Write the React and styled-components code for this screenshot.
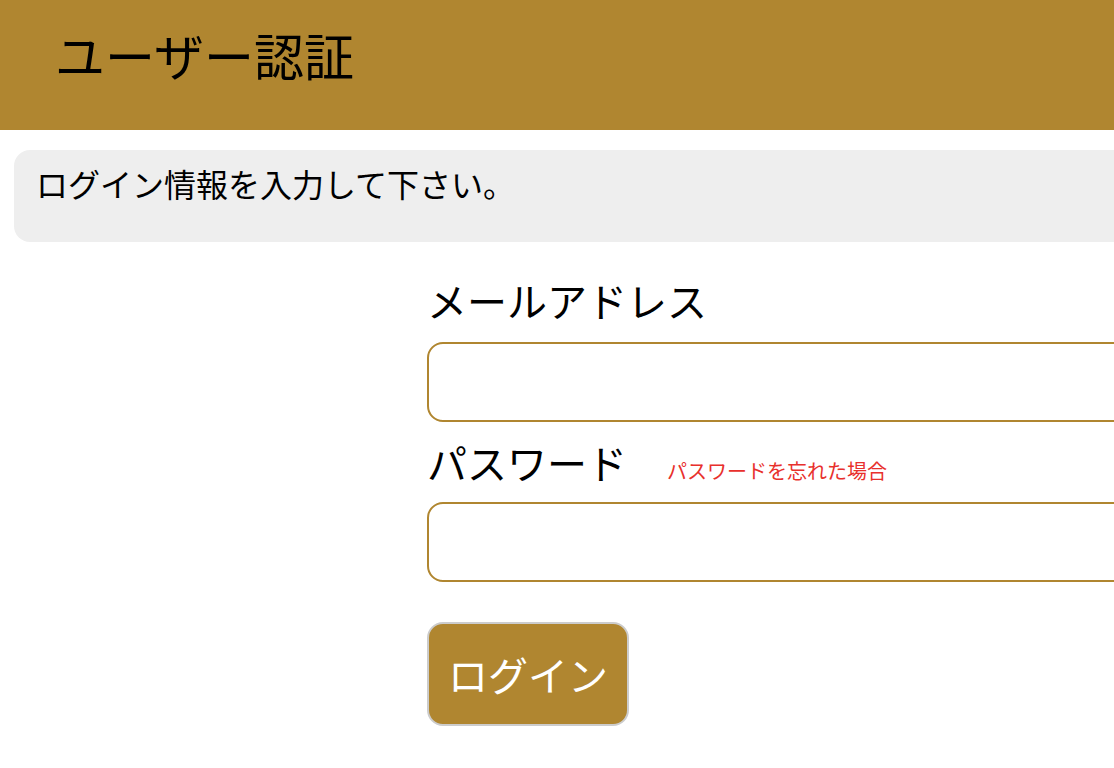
import React from "react";
import styled, { createGlobalStyle } from "styled-components";

const GOLD = "#b08630";

const GlobalStyle = createGlobalStyle`
  html, body {
    margin: 0;
    padding: 0;
    background: #fff;
    overflow: hidden;
  }
  body {
    font-family: "Noto Sans CJK JP", "Noto Sans", sans-serif;
    color: #000;
  }
`;

const Page = styled.div`
  width: 1114px;
  height: 768px;
  overflow: hidden;
`;

const Header = styled.header`
  height: 130px;
  background: ${GOLD};
  padding: 30px 0 0 55px;
  box-sizing: border-box;
`;

const Title = styled.h1`
  margin: 0;
  font-size: 50px;
  line-height: 48px;
  font-weight: 400;
  white-space: nowrap;
`;

const Notice = styled.div`
  margin: 20px 0 0 14px;
  width: 1200px;
  height: 92px;
  box-sizing: border-box;
  padding: 17px 22px;
  background: #eeeeee;
  border-radius: 16px;
  font-size: 32px;
  line-height: 32px;
  white-space: nowrap;
`;

const Form = styled.form`
  margin: 0 0 0 427px;
  padding-top: 38px;
  width: 800px;
  display: flex;
  flex-direction: column;
`;

const LabelRow = styled.div`
  display: flex;
  align-items: baseline;
  margin-top: ${(p) => (p.$first ? "0" : "20px")};
  margin-bottom: ${(p) => (p.$first ? "22px" : "20px")};
`;

const Label = styled.label`
  font-size: 40px;
  line-height: 40px;
  white-space: nowrap;
`;

const ForgotLink = styled.a`
  margin-left: 40px;
  font-size: 20px;
  line-height: 20px;
  color: #e8302c;
  text-decoration: none;
  white-space: nowrap;
`;

const Input = styled.input`
  width: 100%;
  height: 80px;
  box-sizing: border-box;
  border: 2px solid ${GOLD};
  border-radius: 16px;
  padding: 0 16px;
  font-size: 30px;
  font-family: inherit;
  outline: none;
  background: #fff;
`;

const ButtonRow = styled.div`
  margin-top: 40px;
`;

const Button = styled.button`
  width: 202px;
  height: 104px;
  background: ${GOLD};
  color: #fff;
  border: 2px solid #cccccc;
  border-radius: 16px;
  font-family: inherit;
  font-size: 40px;
  cursor: pointer;
  padding: 0;
`;

export default function App() {
  return (
    <Page>
      <GlobalStyle />
      <Header>
        <Title>ユーザー認証</Title>
      </Header>
      <Notice>ログイン情報を入力して下さい。</Notice>
      <Form onSubmit={(e) => e.preventDefault()}>
        <LabelRow $first>
          <Label htmlFor="email">メールアドレス</Label>
        </LabelRow>
        <Input id="email" type="email" />
        <LabelRow>
          <Label htmlFor="password">パスワード</Label>
          <ForgotLink href="#">パスワードを忘れた場合</ForgotLink>
        </LabelRow>
        <Input id="password" type="password" />
        <ButtonRow>
          <Button type="submit">ログイン</Button>
        </ButtonRow>
      </Form>
    </Page>
  );
}
